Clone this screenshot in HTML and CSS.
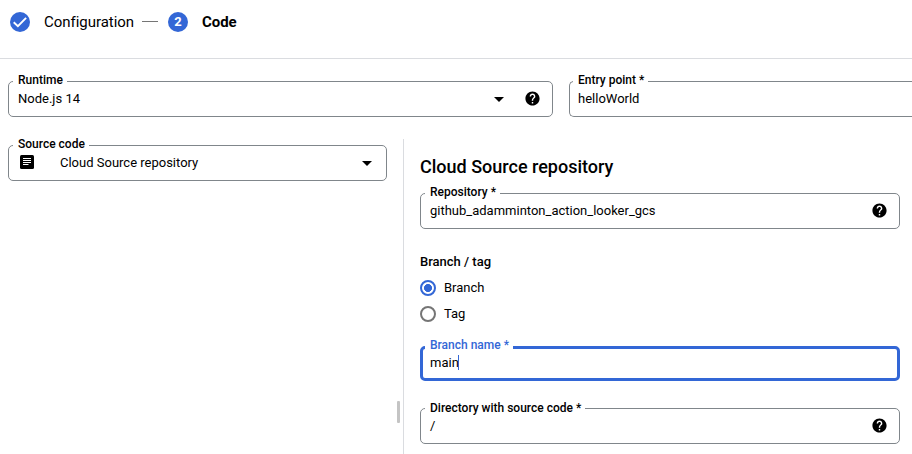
FILE: index.html
```html
<!DOCTYPE html>
<html lang="en">
<head>
<meta charset="utf-8">
<title>Code</title>
<link rel="stylesheet" href="styles.css">
</head>
<body>
<svg class="defs" width="0" height="0">
  <symbol id="help" viewBox="0 0 24 24"><path d="M12 2C6.480 2 2 6.480 2 12s4.480 10 10 10 10-4.480 10-10S17.520 2 12 2zm1 17h-2v-2h2v2zm2.070-7.750l-.9.920C13.450 12.900 13 13.500 13 15h-2v-.5c0-1.100.450-2.100 1.170-2.830l1.240-1.260c.370-.360.590-.860.590-1.410 0-1.100-.9-2-2-2s-2 .9-2 2H8c0-2.210 1.790-4 4-4s4 1.790 4 4c0 .880-.360 1.680-.930 2.250z"/></symbol>
</svg>
<header class="stepper">
  <svg class="step-icon" viewBox="0 0 20 20"><circle cx="10" cy="10" r="10"/><path class="check" d="M3.700 10.200l4.200 4 8.200-8.400"/></svg>
  <span class="step-label">Configuration</span>
  <span class="step-line"></span>
  <span class="step-number">2</span>
  <span class="step-label current">Code</span>
</header>
<div class="top-row">
  <div class="field runtime">
    <span class="label">Runtime</span>
    <span class="value">Node.js 14</span>
    <span class="arrow"></span>
    <svg class="help"><use href="#help"/></svg>
  </div>
  <div class="field entry">
    <span class="label">Entry point *</span>
    <span class="value">helloWorld</span>
  </div>
</div>
<main class="panes">
  <aside class="source-pane">
    <div class="field">
      <span class="label">Source code</span>
      <svg class="source-icon" viewBox="0 0 14 14"><rect width="14" height="14" rx="1.500"/><path d="M3 3.500h8M3 5.500h8M3 7.500h8M3 9.500h5.500"/></svg>
      <span class="value">Cloud Source repository</span>
      <span class="arrow"></span>
    </div>
  </aside>
  <div class="resizer"></div>
  <section class="details">
    <h2>Cloud Source repository</h2>
    <div class="field">
      <span class="label">Repository *</span>
      <span class="value">github_adamminton_action_looker_gcs</span>
      <svg class="help"><use href="#help"/></svg>
    </div>
    <h3>Branch / tag</h3>
    <div class="radio"><span class="dot checked"></span>Branch</div>
    <div class="radio"><span class="dot"></span>Tag</div>
    <div class="field focused">
      <span class="label">Branch name *</span>
      <span class="value">main</span><span class="caret"></span>
    </div>
    <div class="field directory">
      <span class="label">Directory with source code *</span>
      <span class="value">/</span>
      <svg class="help"><use href="#help"/></svg>
    </div>
  </section>
</main>
</body>
</html>
```
FILE: styles.css
```css
* { box-sizing: border-box; }
body {
  margin: 0;
  height: 454px;
  overflow: hidden;
  display: flex;
  flex-direction: column;
  background: #fff;
  color: #000;
  font: 13px/16px Roboto, sans-serif;
}
.defs { position: absolute; }
.stepper {
  flex: none;
  display: flex;
  align-items: center;
  height: 59px;
  padding: 0 10px 15px;
  border-bottom: 1px solid #dadce0;
}
.step-icon, .step-number {
  flex: none;
  width: 20px;
  height: 20px;
}
.step-icon { fill: #3367d6; }
.check { fill: none; stroke: #fff; stroke-width: 1.9; }
.step-label { margin-left: 14px; font-size: 15px; letter-spacing: -.03px; white-space: nowrap; }
.step-line { width: 16px; height: 1px; margin: 0 10px 0 7.8px; background: #757575; }
.step-number {
  border-radius: 50%;
  background: #3367d6;
  color: #fff;
  font-size: 13px;
  font-weight: 700;
  line-height: 20px;
  text-align: center;
}
.current { font-weight: 700; }
.top-row {
  flex: none;
  display: flex;
  gap: 16px;
  padding: 22px 0 0 8px;
}
.field {
  position: relative;
  display: flex;
  align-items: center;
  height: 36px;
  padding: 0 11px 0 9px;
  border: 1px solid #80868b;
  border-radius: 5px;
}
.runtime { flex: none; width: 545px; }
.entry {
  flex: 1;
  padding-left: 8px;
  border-right: 0;
  border-radius: 5px 0 0 5px;
}
.label {
  position: absolute;
  top: -10px;
  left: 4px;
  padding: 0 4px 0 5px;
  background: #fff;
  font-size: 12px;
  font-weight: 500;
  white-space: nowrap;
}
.entry .label { left: 3px; }
.directory .label { top: -9px; }
.value { white-space: nowrap; }
.arrow {
  margin-left: auto;
  border: 5px solid transparent;
  border-top-color: #000;
  border-bottom: 0;
}
.help { width: 17px; height: 17px; margin: 0 0 1px auto; }
.arrow + .help { margin-left: 20px; }
.panes { flex: 1; display: flex; min-height: 0; padding: 22px 12px 0 8px; }
.source-pane { width: 379px; padding-top: 6px; }
.source-icon { width: 14px; height: 14px; margin: 0 26px 2px 2px; }
.source-icon path { stroke: #fff; stroke-width: 1; }
.source-pane .field { padding-right: 14px; }
.resizer {
  width: 3px;
  height: 22px;
  margin: 262px 3px 0 10px;
  border-radius: 1px;
  background: #c4c4c4;
}
.details { flex: 1; padding: 18px 0 0 16px; border-left: 1px solid #dadce0; }
h2 { margin: 0 0 16px; font-size: 18px; line-height: 20px; font-weight: 500; }
h3 { margin: 25px 0 10px; font-size: 13px; line-height: 16px; font-weight: 500; }
.radio { display: flex; align-items: center; gap: 8px; height: 16px; margin-bottom: 10px; }
.dot { width: 16px; height: 16px; border: 2px solid #757575; border-radius: 50%; }
.checked {
  border-color: #3367d6;
  background: radial-gradient(circle, #3367d6 3.7px, #fff 4.3px);
}
.focused {
  height: 35px;
  margin: 24px 0 27px;
  padding: 0 9px 2px 7px;
  border: 3px solid #3367d6;
}
.focused .label { top: -12px; left: 2px; color: #3367d6; }
.caret { width: 1px; height: 15px; margin-left: -1px; background: #3367d6; }
```
